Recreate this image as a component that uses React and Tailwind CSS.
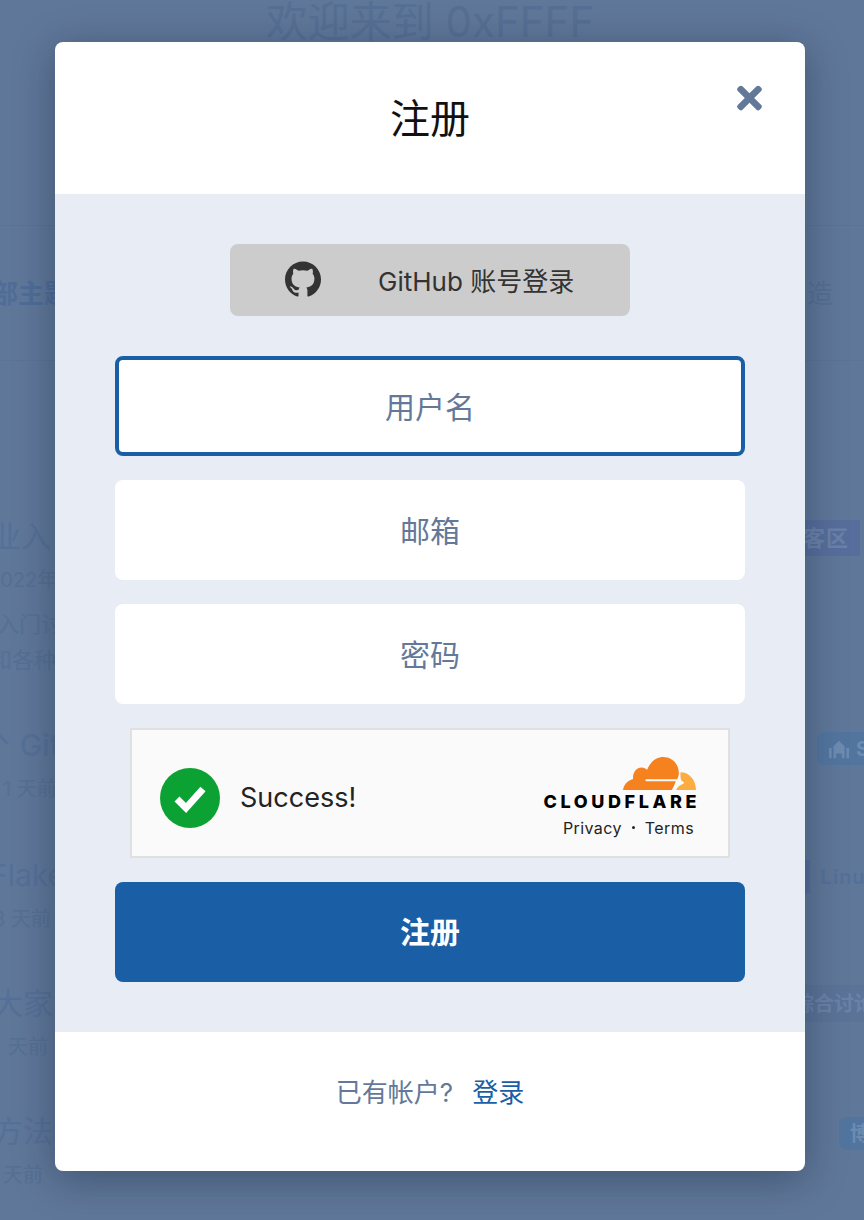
import { FaTimes } from "react-icons/fa";
import { SiGithub } from "react-icons/si";

const cjk = "font-['Inter','Noto_Sans_CJK_SC',sans-serif]";

// topics showing at the edges behind the dialog
const topics = [
  {
    title: "业入",
    titleCls: "-ml-[9px] h-[40px]",
    meta: ["2022年"],
    metaCls: "-ml-[12px] mt-[11px]",
    extra: ["入门讨", "和各种"],
    right: (
      <span className="mr-[4px] mt-[4px] flex h-[36px] w-[60px] items-center justify-end bg-[#576e9c] pr-[11px] text-[22px] font-bold tracking-[1px] text-[#6a82a8] whitespace-nowrap">
        客区
      </span>
    ),
    height: "h-[209px]",
  },
  {
    title: "⌃ Git",
    titleCls: "-ml-[12px] h-[40px] font-medium",
    meta: ["1 天前"],
    metaCls: "ml-[3px] mt-[11px]",
    right: (
      <span className="-mr-[40px] mt-[7px] flex h-[33px] w-[87px] items-center gap-[4px] rounded-[8px] bg-[#52759f] pl-[9px] text-[20px] font-bold text-[#6d8bb0]">
        <svg viewBox="0 0 24 24" className="h-[22px] w-[26px]" fill="currentColor">
          <path d="M1 22V11h3v11zM20 22V11h3v11zM6 22V9l6-6 6 6v13h-3v-5H9v5z" />
        </svg>
        S
      </span>
    ),
    height: "h-[130px]",
  },
  {
    title: "Flake",
    titleCls: "-ml-[10px] h-[40px]",
    meta: ["3 天前"],
    metaCls: "-ml-[7px] mt-[11px]",
    right: (
      <span className="-mr-[14px] mt-[5px] flex h-[33px] items-center gap-[11px] text-[20px] font-semibold tracking-[1px] text-[#557098] whitespace-nowrap">
        <span className="h-[33px] w-[6px] bg-[#576e9c]" />
        Linux
      </span>
    ),
    height: "h-[128px]",
  },
  {
    title: "大家",
    titleCls: "-ml-[7px] h-[40px]",
    meta: ["天前"],
    metaCls: "ml-[8px] mt-[11px]",
    right: (
      <span className="-mr-[10px] mt-[2px] flex h-[37px] w-[80px] items-center justify-end bg-[#5b7397] text-[20px] font-bold text-[#6a82a8] whitespace-nowrap">
        综合讨论
      </span>
    ),
    height: "h-[128px]",
  },
  {
    title: "方法",
    titleCls: "-ml-[7px] h-[40px]",
    meta: ["天前"],
    metaCls: "ml-[3px] mt-[11px]",
    right: (
      <span className="-mr-[20px] mt-[6px] flex h-[33px] w-[45px] items-center rounded-[8px] bg-[#52759f] pl-[11px] text-[20px] font-bold text-[#6d8bb0]">
        博
      </span>
    ),
    height: "h-[88px]",
  },
];

const TopicRow = ({ topic }) => (
  <div className={`flex justify-between ${topic.height}`}>
    <div className={`w-[56px] overflow-hidden whitespace-nowrap ${cjk}`}>
      <p className={`text-[30px] leading-[40px] text-[#557098] ${topic.titleCls}`}>{topic.title}</p>
      {topic.meta.map((m) => (
        <p key={m} className={`text-[20px] leading-[26px] text-[#567095] ${topic.metaCls}`}>
          {m}
        </p>
      ))}
      {topic.extra?.map((m, i) => (
        <p
          key={m}
          className={`text-[22px] leading-[36px] text-[#567095] ${i === 0 ? "mt-[13px] -ml-[3px]" : "-ml-[10px]"}`}
        >
          {m}
        </p>
      ))}
    </div>
    <div className={`flex items-start ${cjk}`}>{topic.right}</div>
  </div>
);

const Field = ({ label, active }) => (
  <div
    className={`flex h-[100px] items-center justify-center rounded-[8px] bg-white pt-[2px] text-[30px] text-[#64789a] ${
      active ? "border-[4px] border-[#1a5fa5]" : ""
    }`}
  >
    {label}
  </div>
);

const CloudflareLogo = () => (
  <svg viewBox="280 37 217 98" className="h-[33px] w-[73px]">
    <path
      d="M280 135C282 119 294 106 310 102C308 84 319 68 335 68C342 68 348 71 352 75C360 52 379 37 400 37C426 37 446 58 446 84C446 92 444 98 441 103L348 103C346 105 346 108 349 109L437 109C434 118 430 127 425 135Z"
      fill="#f6821f"
    />
    <path
      d="M451 82C477 82 497 105 497 135L438 135C440 128 446 121 458 117C462 116 462 112 458 110C452 107 450 100 451 82Z"
      fill="#fbad41"
    />
  </svg>
);

const Turnstile = () => (
  <div className="mx-[15px] flex h-[130px] items-center justify-between border-[2px] border-[#e0e0e0] bg-[#fafafa] pl-[28px] pr-[32px] pt-[10px] font-['Inter',sans-serif] text-[#232323]">
    <div className="flex items-center gap-[20px]">
      <svg viewBox="0 0 60 60" className="h-[60px] w-[60px]">
        <circle cx="30" cy="30" r="30" fill="#0ca133" />
        <path d="M17 31L26 40L43 21" fill="none" stroke="#fff" strokeWidth="7" />
      </svg>
      <span className="text-[27px]">Success!</span>
    </div>
    <div className="mb-[2px] flex flex-col items-end">
      <CloudflareLogo />
      <span className="-mr-[4px] mt-[4px] h-[15px] text-[18px] leading-[15px] font-extrabold tracking-[3.6px] text-black">
        CLOUDFLARE
      </span>
      <div className="mr-[2px] mt-[9px] flex items-center gap-[10px] text-[16px] leading-[20px] tracking-[0.4px]">
        <span>Privacy</span>
        <span className="h-[3px] w-[3px] rounded-full bg-[#232323]" />
        <span>Terms</span>
      </div>
    </div>
  </div>
);

const App = () => {
  return (
    <div className={`relative h-[1220px] w-full overflow-hidden bg-[#5f7799] ${cjk}`}>
      {/* page behind the dialog */}
      <h1 className="h-[225px] w-[860px] text-center text-[42px] leading-[44px] text-[#566f94]">
        欢迎来到 0xFFFF
      </h1>
      <div className="flex h-[136px] items-center justify-between border-y border-[#5a7396] pr-[31px] text-[26px]">
        <span className="-ml-[8px] w-[63px] overflow-hidden font-semibold whitespace-nowrap text-[#4f6d98]">部主题</span>
        <span className="text-[#566f94]">造</span>
      </div>
      <div className="pt-[155px]">
        {topics.map((t) => (
          <TopicRow key={t.title} topic={t} />
        ))}
      </div>

      {/* dialog */}
      <div className="absolute inset-y-0 left-0 flex w-[860px] justify-center pt-[42px]">
        <div className="h-[1129px] w-[750px] overflow-hidden rounded-[8px] bg-white shadow-[0_8px_40px_rgba(10,20,40,0.35)]">
          <div className="relative flex h-[152px] items-center justify-center text-[40px] text-[#111]">
            <span className="mt-[2px]">注册</span>
            <FaTimes className="absolute right-[43px] top-[38px] h-[36px] w-[25px] text-[#64789a]" />
          </div>
          <div className="flex h-[838px] flex-col bg-[#e8ecf5] px-[60px] pt-[50px]">
            <div className="relative mx-auto flex h-[72px] w-[400px] items-center rounded-[8px] bg-[#cccccc] pl-[148px] pt-[3px] text-[26px] text-[#333]">
              <SiGithub className="absolute left-[55px] top-[17px] h-[36px] w-[36px]" />
              GitHub 账号登录
            </div>
            <div className="mt-[40px] flex flex-col gap-[24px]">
              <Field label="用户名" active />
              <Field label="邮箱" />
              <Field label="密码" />
              <Turnstile />
              <div className="flex h-[100px] items-center justify-center rounded-[8px] bg-[#1a5fa6] text-[30px] font-bold text-white">
                注册
              </div>
            </div>
          </div>
          <div className="flex h-[139px] items-center justify-center gap-[19px] pb-[19px] text-[26px]">
            <span className="text-[#64789a]">已有帐户?</span>
            <span className="text-[#1a5fa6]">登录</span>
          </div>
        </div>
      </div>
    </div>
  );
};

export default App;
